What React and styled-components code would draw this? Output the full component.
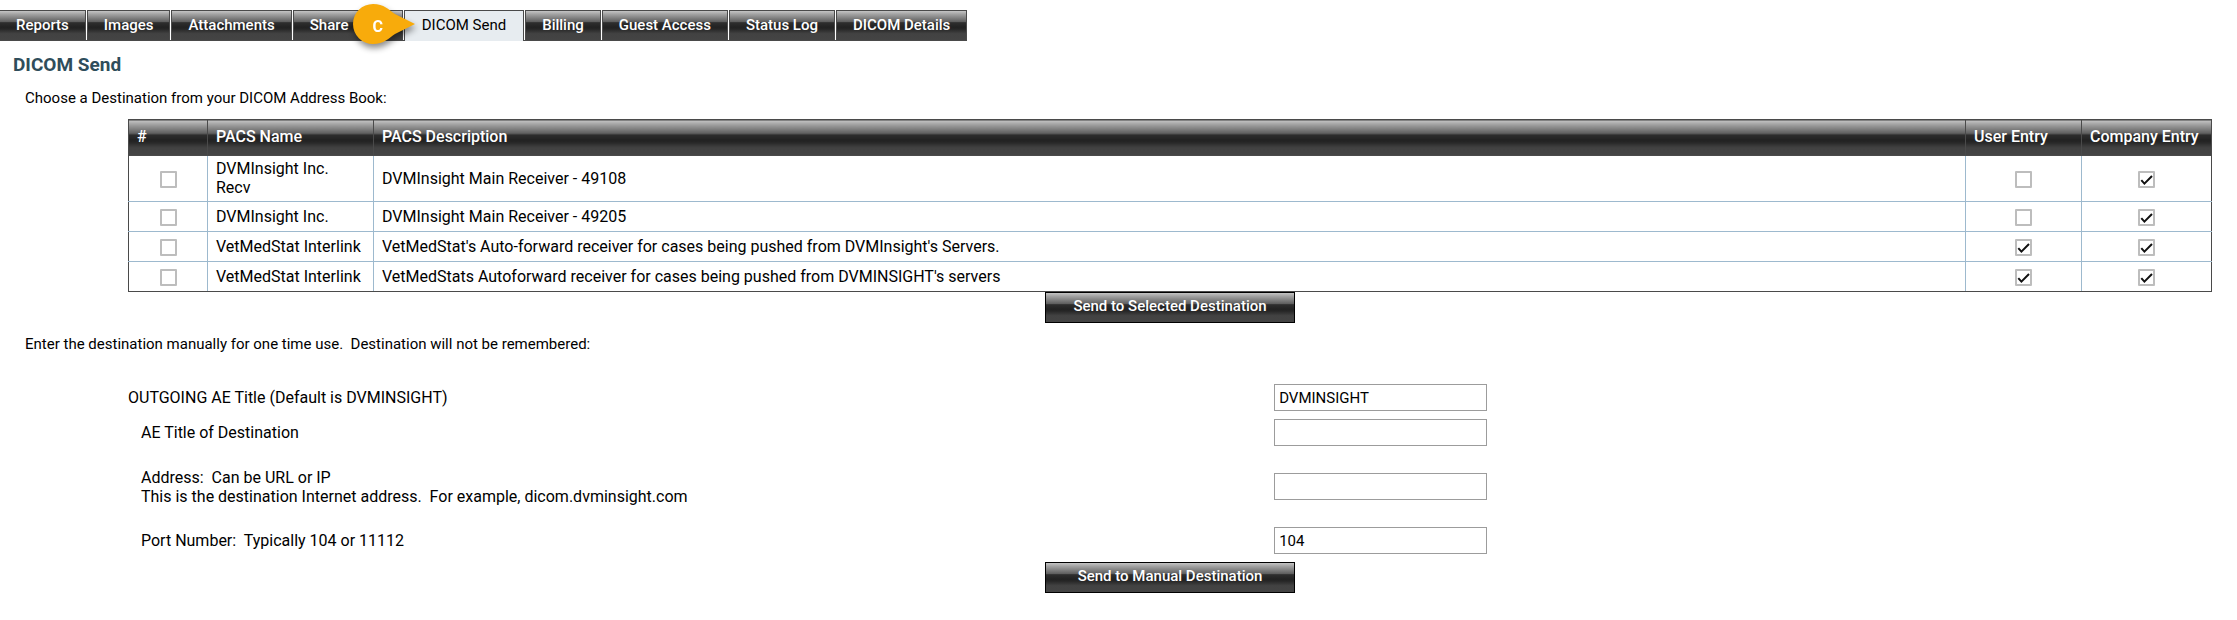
import { useId, useState } from "react";
import styled, { createGlobalStyle } from "styled-components";

const colors = {
    text: "#000000",
    heading: "#2f4d5b",
    frame: "#4a4a4a",
    cellLine: "#9db9ce",
    activeTab: "#e7ecf0",
    marker: "#f8ab0b",
};

const gloss =
    "linear-gradient(#c4c4c4 0%, #a0a0a0 12%, #5c5c5c 38%, #2e2e2e 40%, #222222 56%, #262626 62%, #424242 78%, #444444 100%)";

const tabs = [
    "Reports",
    "Images",
    "Attachments",
    "Share",
    "DICOM Send",
    "Billing",
    "Guest Access",
    "Status Log",
    "DICOM Details",
];

const destinations = [
    {
        id: 1,
        name: "DVMInsight Inc. Recv",
        description: "DVMInsight Main Receiver - 49108",
        user: false,
        company: true,
    },
    {
        id: 2,
        name: "DVMInsight Inc.",
        description: "DVMInsight Main Receiver - 49205",
        user: false,
        company: true,
    },
    {
        id: 3,
        name: "VetMedStat Interlink",
        description: "VetMedStat's Auto-forward receiver for cases being pushed from DVMInsight's Servers.",
        user: true,
        company: true,
    },
    {
        id: 4,
        name: "VetMedStat Interlink",
        description: "VetMedStats Autoforward receiver for cases being pushed from DVMINSIGHT's servers",
        user: true,
        company: true,
    },
];

export default function App() {
    const [selected, setSelected] = useState({});

    function toggle(id) {
        setSelected({ ...selected, [id]: !selected[id] });
    }

    return (
        <>
            <GlobalStyle />
            <Tabs>
                {tabs.map((tab) => (
                    <Tab key={tab} href="#" $active={tab === "DICOM Send"} $wide={tab === "Share"}>
                        {tab}
                        {tab === "DICOM Send" && <StepMarker letter="C" />}
                    </Tab>
                ))}
            </Tabs>
            <Title>DICOM Send</Title>
            <Hint>Choose a Destination from your DICOM Address Book:</Hint>
            <Section>
                <Table>
                    <colgroup>
                        <Col $width={79} />
                        <Col $width={166} />
                        <Col />
                        <Col $width={116} />
                        <Col $width={130} />
                    </colgroup>
                    <thead>
                        <tr>
                            <HeadCell>#</HeadCell>
                            <HeadCell>PACS Name</HeadCell>
                            <HeadCell>PACS Description</HeadCell>
                            <HeadCell>User Entry</HeadCell>
                            <HeadCell>Company Entry</HeadCell>
                        </tr>
                    </thead>
                    <tbody>
                        {destinations.map((item) => (
                            <tr key={item.id}>
                                <Cell $center>
                                    <Checkbox
                                        label={`Select ${item.description}`}
                                        checked={!!selected[item.id]}
                                        onChange={() => toggle(item.id)}
                                    />
                                </Cell>
                                <Cell>{item.name}</Cell>
                                <Cell>{item.description}</Cell>
                                <Cell $center>
                                    <Checkbox label="User Entry" checked={item.user} readOnly />
                                </Cell>
                                <Cell $center>
                                    <Checkbox label="Company Entry" checked={item.company} readOnly />
                                </Cell>
                            </tr>
                        ))}
                    </tbody>
                </Table>
                <SendButton type="button">Send to Selected Destination</SendButton>
            </Section>
            <Hint $spaced>
                Enter the destination manually for one time use.&nbsp; Destination will not be remembered:
            </Hint>
            <Section as="form">
                <Fields>
                    <Field label="OUTGOING AE Title (Default is DVMINSIGHT)" value="DVMINSIGHT" />
                    <Field indent label="AE Title of Destination" />
                    <Field
                        indent
                        tall
                        label={
                            <>
                                Address:&nbsp; Can be URL or IP
                                <br />
                                This is the destination Internet address.&nbsp; For example, dicom.dvminsight.com
                            </>
                        }
                    />
                    <Field indent label={<>Port Number:&nbsp; Typically 104 or 11112</>} value="104" />
                </Fields>
                <SendButton type="button">Send to Manual Destination</SendButton>
            </Section>
        </>
    );
}

function StepMarker({ letter }) {
    return (
        <Marker>
            <svg width="72" height="56" viewBox="0 0 72 56">
                <path
                    d="M24 4C35 4 40 10 46 14L66 24L46 34C40 38 35 44 24 44A20 20 0 0 1 24 4Z"
                    fill={colors.marker}
                />
            </svg>
            <MarkerLetter>{letter}</MarkerLetter>
        </Marker>
    );
}

function Checkbox({ label, ...props }) {
    return (
        <Box>
            <BoxInput type="checkbox" aria-label={label} {...props} />
            {props.checked && (
                <Tick width="17" height="17" viewBox="0 0 17 17">
                    <path d="M3.3 9.2L6.4 12.6L14 5" fill="none" stroke="#111111" strokeWidth="2" />
                </Tick>
            )}
        </Box>
    );
}

function Field({ label, value = "", indent, tall }) {
    const id = useId();

    return (
        <FieldRow $tall={tall}>
            <Label htmlFor={id} $indent={indent}>
                {label}
            </Label>
            <TextInput id={id} type="text" defaultValue={value} />
        </FieldRow>
    );
}

const GlobalStyle = createGlobalStyle`
    * {
        box-sizing: border-box;
    }

    body {
        margin: 0;
        background: #ffffff;
        color: ${colors.text};
        font-family: Roboto, "Liberation Sans", sans-serif;
        font-size: 15px;
        line-height: 19px;
    }
`;

const Tabs = styled.nav`
    display: flex;
    gap: 1px;
    width: fit-content;
    height: 31px;
    margin-top: 10px;
    border-bottom: 1px solid ${colors.frame};
`;

const Tab = styled.a`
    position: relative;
    display: flex;
    align-items: center;
    height: ${({ $active }) => ($active ? "31px" : "30px")};
    min-width: ${({ $wide }) => ($wide ? "110px" : "0")};
    padding: ${({ $active }) => ($active ? "0 17px 2px" : "0 16px")};
    border: 1px solid ${colors.frame};
    border-bottom: none;
    background: ${({ $active }) => ($active ? colors.activeTab : gloss)};
    color: ${({ $active }) => ($active ? colors.text : "#ffffff")};
    font-weight: ${({ $active }) => ($active ? 400 : 500)};
    text-decoration: none;
    white-space: nowrap;

    &:first-child {
        border-left: none;
    }
`;

const Marker = styled.span`
    position: absolute;
    top: -11px;
    left: -56px;
    width: 72px;
    height: 56px;
    filter: drop-shadow(1px 4px 3px rgba(0, 0, 0, 0.45));
`;

const MarkerLetter = styled.span`
    position: absolute;
    top: 17px;
    left: 19px;
    width: 20px;
    color: #ffffff;
    font-size: 16px;
    font-weight: 700;
    text-align: center;
`;

const Title = styled.h1`
    margin: 12px 0 0 13px;
    color: ${colors.heading};
    font-size: 19px;
    font-weight: 700;
    line-height: 24px;
`;

const Hint = styled.p`
    margin: ${({ $spaced }) => ($spaced ? "12px 0 26px 25px" : "12px 0 11px 25px")};
`;

const Section = styled.section`
    display: flex;
    flex-direction: column;
    align-items: center;
    margin: 0 25px 0 128px;
`;

const Table = styled.table`
    width: 100%;
    table-layout: fixed;
    border-collapse: collapse;
    border: 1px solid ${colors.frame};
    font-size: 16px;
`;

const Col = styled.col`
    width: ${({ $width }) => ($width ? `${$width}px` : "auto")};
`;

const HeadCell = styled.th`
    height: 36px;
    padding: 0 8px 2px;
    border-left: 1px solid ${colors.frame};
    background: ${gloss};
    color: #ffffff;
    font-weight: 500;
    text-align: left;
    white-space: nowrap;
`;

const Cell = styled.td`
    height: 30px;
    padding: ${({ $center }) => ($center ? "0 0 1px" : "3px 8px 4px")};
    border: 1px solid ${colors.cellLine};
    text-align: ${({ $center }) => ($center ? "center" : "left")};

    &:first-child {
        border-left-color: ${colors.frame};
    }

    &:last-child {
        border-right-color: ${colors.frame};
    }

    tr:first-child > & {
        border-top-color: ${colors.frame};
    }

    tr:last-child > & {
        border-bottom-color: ${colors.frame};
    }
`;

const Box = styled.span`
    display: inline-grid;
    vertical-align: middle;

    & > * {
        grid-area: 1 / 1;
    }
`;

const BoxInput = styled.input`
    appearance: none;
    width: 17px;
    height: 17px;
    margin: 0;
    border: 2px solid #bdbdbd;
    border-radius: 1px;
    background: #ffffff;
`;

const Tick = styled.svg`
    pointer-events: none;
`;

const SendButton = styled.button`
    width: 250px;
    height: 31px;
    padding: 0 0 3px;
    border: 1px solid #000000;
    background: ${gloss};
    color: #ffffff;
    font: inherit;
    font-weight: 500;
`;

const Fields = styled.div`
    width: 100%;
    margin-bottom: 4px;
`;

const FieldRow = styled.div`
    display: grid;
    grid-template-columns: 55% 213px;
    align-items: center;
    min-height: ${({ $tall }) => ($tall ? "73px" : "35px")};
`;

const Label = styled.label`
    padding-left: ${({ $indent }) => ($indent ? "13px" : "0")};
    font-size: 16px;
`;

const TextInput = styled.input`
    height: 27px;
    padding: 0 4px;
    border: 1px solid #9c9c9c;
    background: #ffffff;
    color: ${colors.text};
    font: inherit;
`;
